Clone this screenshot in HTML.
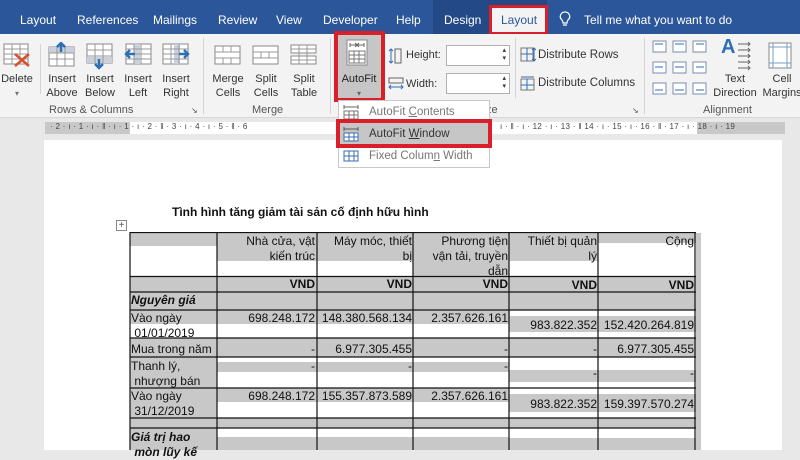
<!DOCTYPE html>
<html><head><meta charset="utf-8">
<style>
*{margin:0;padding:0;box-sizing:border-box}
body{width:800px;height:450px;overflow:hidden;position:relative;background:#e8e8e8;font-family:"Liberation Sans",sans-serif;}
.abs{position:absolute}
#tabs{left:0;top:0;width:800px;height:34px;background:#2b579a;color:#fff;font-size:12px}
#tabs span{position:absolute;top:13px}
#rib{left:0;top:34px;width:800px;height:84px;background:#f3f3f3;border-bottom:1px solid #d6d6d6}
.lbl{position:absolute;font-size:11px;color:#333;text-align:center;line-height:14px}
.grp{position:absolute;font-size:11px;color:#555;top:70px}
.sep{position:absolute;top:4px;width:1px;height:76px;background:#d4d4d4}
svg{position:absolute}
#ruler{left:0;top:118px;width:800px;height:20px;background:#e8e8e8}
#page{left:44px;top:140px;width:738px;height:310px;background:#fff}
.cell{position:absolute;font-family:"Liberation Sans",sans-serif;font-size:12px;color:#111;line-height:15px}
.r{text-align:right}
</style></head><body>
<div id="tabs" class="abs">
<span style="left:20px">Layout</span>
<span style="left:77px">References</span>
<span style="left:153px">Mailings</span>
<span style="left:218px">Review</span>
<span style="left:276px">View</span>
<span style="left:323px">Developer</span>
<span style="left:396px">Help</span>
<div class="abs" style="left:433px;top:0;width:114px;height:34px;background:#234a86"></div>
<span style="left:444px">Design</span>
<div class="abs" style="left:489px;top:5px;width:59px;height:30px;background:#f3f3f3;border:3px solid #d9202a"></div>
<span style="left:501px;color:#2b579a">Layout</span>
<svg style="left:559px;top:11px" width="12" height="16"><path d="M6 1a4.5 4.5 0 0 0-3 8c1 1 1 2 1 3h4c0-1 0-2 1-3a4.5 4.5 0 0 0-3-8zM4 14h4" stroke="#fff" fill="none" stroke-width="1.2"/></svg>
<span style="left:584px">Tell me what you want to do</span>
</div>
<div id="rib" class="abs">
<svg style="left:3px;top:8px" width="28" height="26"><rect x="1" y="2" width="24" height="20" fill="#fff" stroke="#888"/><path d="M1 7h24M1 12h24M1 17h24M9 2v20M17 2v20" stroke="#999"/><path d="M12 12l14 12M26 12L12 24" stroke="#d9502f" stroke-width="2.5"/></svg>
<div class="lbl" style="left:0;top:38px;width:34px">Delete<br><span style="font-size:8px;color:#777">▾</span></div>
<div class="sep" style="left:40px;top:10px;height:50px"></div>
<svg style="left:48px;top:8px" width="28" height="26"><rect x="1" y="5" width="25" height="19" fill="#fff" stroke="#888"/><rect x="1" y="5" width="25" height="6" fill="#c9d2dc"/><path d="M1 11h25M1 17h25M9 5v19M17 5v19" stroke="#999"/><path d="M13 1v9M9 5l4-4 4 4" stroke="#2f6fb5" stroke-width="2.5" fill="none"/></svg>
<div class="lbl" style="left:44px;top:38px;width:36px">Insert<br>Above</div>
<svg style="left:86px;top:8px" width="28" height="28"><rect x="1" y="2" width="25" height="19" fill="#fff" stroke="#888"/><rect x="1" y="15" width="25" height="6" fill="#c9d2dc"/><path d="M1 8h25M1 14h25M9 2v19M17 2v19" stroke="#999"/><path d="M13 17v9M9 22l4 4 4-4" stroke="#2f6fb5" stroke-width="2.5" fill="none"/></svg>
<div class="lbl" style="left:82px;top:38px;width:36px">Insert<br>Below</div>
<svg style="left:124px;top:8px" width="28" height="26"><rect x="2" y="2" width="25" height="20" fill="#fff" stroke="#888"/><rect x="10" y="2" width="6" height="20" fill="#c9d2dc"/><path d="M2 7h25M2 12h25M2 17h25M10 2v20M17 2v20" stroke="#999"/><path d="M11 12H2M6 8l-4 4 4 4" stroke="#2f6fb5" stroke-width="2.5" fill="none"/></svg>
<div class="lbl" style="left:120px;top:38px;width:36px">Insert<br>Left</div>
<svg style="left:162px;top:8px" width="28" height="26"><rect x="1" y="2" width="25" height="20" fill="#fff" stroke="#888"/><rect x="12" y="2" width="6" height="20" fill="#c9d2dc"/><path d="M1 7h25M1 12h25M1 17h25M9 2v20M17 2v20" stroke="#999"/><path d="M17 12h9M22 8l4 4-4 4" stroke="#2f6fb5" stroke-width="2.5" fill="none"/></svg>
<div class="lbl" style="left:158px;top:38px;width:36px">Insert<br>Right</div>
<div class="grp" style="left:49px">Rows &amp; Columns</div>
<div class="grp" style="left:191px;top:72px;font-size:8px">↘</div>
<div class="sep" style="left:203px"></div>
<svg style="left:214px;top:8px" width="28" height="26"><rect x="1" y="4" width="25" height="18" fill="#fff" stroke="#888"/><path d="M1 10h25M1 16h25M9 4v6M17 4v6M9 16v6M17 16v6" stroke="#999"/></svg>
<div class="lbl" style="left:210px;top:38px;width:36px">Merge<br>Cells</div>
<svg style="left:252px;top:8px" width="28" height="26"><rect x="1" y="4" width="25" height="18" fill="#fff" stroke="#888"/><path d="M1 10h25M1 16h25M9 10v6M17 10v6" stroke="#999"/></svg>
<div class="lbl" style="left:248px;top:38px;width:36px">Split<br>Cells</div>
<svg style="left:290px;top:8px" width="28" height="26"><rect x="1" y="3" width="25" height="8" fill="#fff" stroke="#888"/><rect x="1" y="14" width="25" height="8" fill="#fff" stroke="#888"/><path d="M1 7h25M1 18h25M9 3v19M17 3v19" stroke="#999"/></svg>
<div class="lbl" style="left:286px;top:38px;width:36px">Split<br>Table</div>
<div class="grp" style="left:252px">Merge</div>
<div class="sep" style="left:330px"></div>
<div class="abs" style="left:334px;top:-3px;width:51px;height:71px;border:4px solid #d9202a;background:#c6c6c6"></div>
<svg style="left:346px;top:5px" width="24" height="28"><rect x="1" y="1" width="20" height="25" fill="#fff" stroke="#888"/><path d="M4 6h14M4 4v4M18 4v4M9 4l4 4M13 4l-4 4" stroke="#666" stroke-width="1"/><path d="M3 12h16v12H3zM3 16h16M3 20h16M8 12v12M13 12v12" stroke="#777" fill="none"/></svg>
<div class="lbl" style="left:336px;top:38px;width:46px;color:#222">AutoFit<br><span style="font-size:8px;color:#666">▾</span></div>
<svg style="left:388px;top:13px" width="14" height="18"><path d="M3 2v14M1 4l2-2 2 2M1 14l2 2 2-2" stroke="#2f6fb5" fill="none"/><rect x="7" y="2" width="6" height="14" fill="none" stroke="#666"/></svg>
<div class="lbl" style="left:406px;top:14px">Height:</div>
<div class="abs" style="left:446px;top:11px;width:64px;height:21px;background:#fff;border:1px solid #b0b0b0"><span style="position:absolute;right:3px;top:1px;font-size:7px;line-height:8px;color:#333">▴<br>▾</span></div>
<svg style="left:388px;top:42px" width="16" height="16"><rect x="1" y="2" width="14" height="5" fill="none" stroke="#666"/><path d="M1 11h14M3 9l-2 2 2 2M13 9l2 2-2 2" stroke="#2f6fb5" fill="none"/></svg>
<div class="lbl" style="left:406px;top:43px">Width:</div>
<div class="abs" style="left:446px;top:39px;width:64px;height:21px;background:#fff;border:1px solid #b0b0b0"><span style="position:absolute;right:3px;top:1px;font-size:7px;line-height:8px;color:#333">▴<br>▾</span></div>
<div class="sep" style="left:515px;height:60px"></div>
<svg style="left:520px;top:13px" width="16" height="16"><rect x="1" y="1" width="12" height="13" fill="none" stroke="#777"/><path d="M1 7h12M7 1v13M14 1v13M12 3l2-2 2 2M12 12l2 2 2-2" stroke="#2f6fb5" fill="none"/></svg>
<div class="lbl" style="left:538px;top:14px;font-size:11.5px">Distribute Rows</div>
<svg style="left:520px;top:41px" width="16" height="16"><rect x="1" y="4" width="13" height="11" fill="none" stroke="#777"/><path d="M1 10h13M7 4v11M1 2h13" stroke="#2f6fb5" fill="none"/></svg>
<div class="lbl" style="left:538px;top:42px;font-size:11.5px">Distribute Columns</div>
<div class="grp" style="left:632px;top:72px;font-size:8px">↘</div>
<div class="sep" style="left:644px"></div>
<svg style="left:652px;top:6px" width="70" height="56"><g fill="#fff" stroke="#7a8ea8"><rect x="1" y="1" width="13" height="11"/><rect x="21" y="1" width="13" height="11"/><rect x="41" y="1" width="13" height="11"/><rect x="1" y="22" width="13" height="11"/><rect x="21" y="22" width="13" height="11"/><rect x="41" y="22" width="13" height="11"/><rect x="1" y="43" width="13" height="11"/><rect x="21" y="43" width="13" height="11"/><rect x="41" y="43" width="13" height="11"/></g><g stroke="#2f6fb5"><path d="M3 4h8M23 4h9M44 4h8M3 27h8M23 27h9M44 27h8M3 50h8M23 50h9M44 50h8"/></g></svg>
<div class="abs" style="left:721px;top:2px;font-size:20px;color:#2f6fb5;font-weight:bold">A</div>
<svg style="left:738px;top:8px" width="14" height="32"><path d="M0 2h12M0 8h12M0 14h12M0 20h12M0 26h12" stroke="#666"/><path d="M10 0l2 2-2 2M10 6l2 2-2 2M10 12l2 2-2 2M10 18l2 2-2 2M10 24l2 2-2 2" stroke="#666" fill="none"/></svg>
<div class="lbl" style="left:712px;top:38px;width:46px">Text<br>Direction</div>
<svg style="left:768px;top:8px" width="26" height="28"><rect x="1" y="1" width="22" height="25" fill="#fff" stroke="#888"/><path d="M5 1v25M19 1v25M1 5h22M1 21h22" stroke="#7a9cc9"/></svg>
<div class="lbl" style="left:760px;top:38px;width:44px">Cell<br>Margins</div>
<div class="grp" style="left:703px">Alignment</div>
<div class="grp" style="left:486px">ze</div>
</div>
<div id="ruler" class="abs">
<div class="abs" style="left:45px;top:4px;width:740px;height:12px;background:#c8c8c8"></div>
<div class="abs" style="left:130px;top:4px;width:567px;height:12px;background:#fff"></div>
<div class="abs" style="left:50px;top:4px;font-size:8px;color:#444;letter-spacing:0.3px;white-space:nowrap">· 2 · ı · 1 · ı · ‖ · ı · 1 · ı · 2 · ‖ · 3 · ı · 4 · ı · 5 · ‖ · 6</div>
<div class="abs" style="left:500px;top:4px;font-size:8px;color:#444;letter-spacing:0.3px;white-space:nowrap">ı · ‖ · ı · 12 · ı · 13 · ‖ 14 · ı · 15 · ı · 16 · ‖ · 17 · ı · 18 · ı · 19</div>
</div>
<div id="page" class="abs"></div>
<div class="abs" style="left:338px;top:100px;width:152px;height:68px;background:#fff;border:1px solid #c8c8c8"></div>
<svg style="left:343px;top:104px" width="18" height="16"><path d="M1 3h14M1 1v4M15 1v4" stroke="#666"/><rect x="1" y="7" width="14" height="8" fill="#fff" stroke="#777"/><path d="M1 11h14M6 7v8M11 7v8" stroke="#777"/></svg>
<div class="lbl" style="left:369px;top:105px;font-size:11.5px;color:#777">AutoFit <u>C</u>ontents</div>
<div class="abs" style="left:336px;top:119px;width:156px;height:29px;background:#c6c6c6;border:4px solid #d9202a"></div>
<svg style="left:343px;top:126px" width="18" height="16"><path d="M1 3h14M1 1v4M15 1v4" stroke="#555"/><rect x="1" y="7" width="14" height="8" fill="#fff" stroke="#3a6db0"/><path d="M1 11h14M6 7v8M11 7v8" stroke="#3a6db0"/></svg>
<div class="lbl" style="left:369px;top:127px;font-size:11.5px;color:#333">AutoFit <u>W</u>indow</div>
<svg style="left:343px;top:148px" width="18" height="14"><rect x="1" y="3" width="14" height="10" fill="#fff" stroke="#3a6db0"/><path d="M1 8h14M6 3v10M11 3v10" stroke="#3a6db0"/></svg>
<div class="lbl" style="left:369px;top:149px;font-size:11.5px;color:#777">Fixed Colum<u>n</u> Width</div>
<div class="abs" style="left:172px;top:205px;font-size:12px;font-weight:bold;color:#111">Tình hình tăng giảm tài sản cố định hữu hình</div>
<div class="abs" style="left:116px;top:220px;width:11px;height:11px;border:1px solid #888;font-size:10px;line-height:9px;text-align:center;color:#555">+</div>
<svg style="left:129px;top:232px" width="572" height="218">
<g fill="#c8c8c8">
<rect x="1" y="1" width="87" height="13"/><rect x="88" y="1" width="100" height="28"/><rect x="188" y="1" width="96" height="28"/><rect x="284" y="1" width="96" height="44"/><rect x="380" y="1" width="89" height="28"/><rect x="469" y="1" width="98" height="10"/>
<rect x="1" y="44" width="566" height="16"/>
<rect x="1" y="60" width="566" height="18"/>
<rect x="1" y="78" width="380" height="14"/><rect x="380" y="84" width="187" height="16"/>
<rect x="1" y="106" width="566" height="19"/>
<rect x="1" y="125" width="87" height="31"/><rect x="88" y="130" width="292" height="10"/><rect x="380" y="138" width="187" height="12"/>
<rect x="1" y="156" width="87" height="30"/><rect x="88" y="156" width="292" height="14"/><rect x="380" y="162" width="187" height="18"/>
<rect x="1" y="186" width="566" height="10"/>
<rect x="1" y="196" width="87" height="22"/><rect x="88" y="205" width="292" height="13"/><rect x="380" y="206" width="187" height="12"/>
<rect x="567" y="1" width="5" height="217"/>
</g>
<g stroke="#111" stroke-width="1.2" fill="none">
<path d="M1 0.5h566M1 44.5h566M1 60h566M1 78h566M1 106h566M1 125h566M1 156h566M1 186h566M1 196h566"/>
<path d="M1 0v218M88 0v218M188 0v218M284 0v218M380 0v218M469 0v218M566 0v218"/>
</g>
</svg>
<div class="cell r" style="left:218px;top:234px;width:97px">Nhà cửa, vật<br>kiến trúc</div>
<div class="cell r" style="left:318px;top:234px;width:94px">Máy móc, thiết<br>bị</div>
<div class="cell r" style="left:414px;top:234px;width:94px">Phương tiện<br>vận tải, truyền<br>dẫn</div>
<div class="cell r" style="left:510px;top:234px;width:87px">Thiết bị quản<br>lý</div>
<div class="cell r" style="left:599px;top:234px;width:95px">Cộng</div>
<div class="cell r" style="left:218px;top:277px;width:97px;font-weight:bold">VND</div>
<div class="cell r" style="left:318px;top:277px;width:94px;font-weight:bold">VND</div>
<div class="cell r" style="left:414px;top:277px;width:94px;font-weight:bold">VND</div>
<div class="cell r" style="left:510px;top:278px;width:87px;font-weight:bold">VND</div>
<div class="cell r" style="left:599px;top:278px;width:95px;font-weight:bold">VND</div>
<div class="cell" style="left:131px;top:293px;font-weight:bold;font-style:italic">Nguyên giá</div>
<div class="cell" style="left:131px;top:311px">Vào ngày<br>&nbsp;01/01/2019</div>
<div class="cell r" style="left:218px;top:311px;width:97px">698.248.172</div>
<div class="cell r" style="left:318px;top:311px;width:94px">148.380.568.134</div>
<div class="cell r" style="left:414px;top:311px;width:94px">2.357.626.161</div>
<div class="cell r" style="left:510px;top:318px;width:87px">983.822.352</div>
<div class="cell r" style="left:599px;top:318px;width:95px">152.420.264.819</div>
<div class="cell" style="left:131px;top:342px">Mua trong năm</div>
<div class="cell r" style="left:218px;top:342px;width:97px">-</div>
<div class="cell r" style="left:318px;top:342px;width:94px">6.977.305.455</div>
<div class="cell r" style="left:414px;top:342px;width:94px">-</div>
<div class="cell r" style="left:510px;top:342px;width:87px">-</div>
<div class="cell r" style="left:599px;top:342px;width:95px">6.977.305.455</div>
<div class="cell" style="left:131px;top:359px">Thanh lý,<br>&nbsp;nhượng bán</div>
<div class="cell r" style="left:218px;top:359px;width:97px">-</div>
<div class="cell r" style="left:318px;top:359px;width:94px">-</div>
<div class="cell r" style="left:414px;top:359px;width:94px">-</div>
<div class="cell r" style="left:510px;top:366px;width:87px">-</div>
<div class="cell r" style="left:599px;top:366px;width:95px">-</div>
<div class="cell" style="left:131px;top:389px">Vào ngày<br>&nbsp;31/12/2019</div>
<div class="cell r" style="left:218px;top:389px;width:97px">698.248.172</div>
<div class="cell r" style="left:318px;top:389px;width:94px">155.357.873.589</div>
<div class="cell r" style="left:414px;top:389px;width:94px">2.357.626.161</div>
<div class="cell r" style="left:510px;top:397px;width:87px">983.822.352</div>
<div class="cell r" style="left:599px;top:397px;width:95px">159.397.570.274</div>
<div class="cell" style="left:131px;top:430px;font-weight:bold;font-style:italic">Giá trị hao<br>&nbsp;mòn lũy kế</div>
</body></html>
